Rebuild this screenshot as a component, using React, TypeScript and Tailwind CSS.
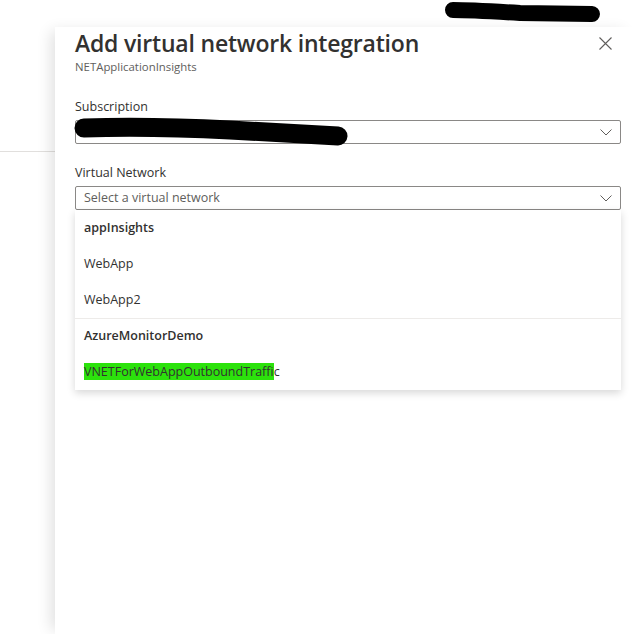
import React from 'react';

const font = { fontFamily: '"Open Sans", "Noto Sans", Arial, sans-serif' };

function Chevron() {
  return (
    <svg width="12" height="7" viewBox="0 0 12 7" fill="none">
      <path d="M0.5 0.5 L6 6 L11.5 0.5" stroke="#605e5c" strokeWidth="1" />
    </svg>
  );
}

type Item = { label: string; header?: boolean; highlight?: string; rest?: string; divider?: boolean };

const items: Item[] = [
  { label: 'appInsights', header: true },
  { label: 'WebApp' },
  { label: 'WebApp2' },
  { label: 'AzureMonitorDemo', header: true, divider: true },
  { label: 'VNETForWebAppOutboundTraffic', highlight: 'VNETForWebAppOutboundTraffi', rest: 'c' },
];

export default function App() {
  return (
    <div className="relative w-[634px] h-[634px] overflow-hidden bg-white flex text-[#323130]" style={font}>
      {/* blade behind */}
      <div className="w-[55px] shrink-0 pt-[151px]">
        <div className="border-t border-[#e1dfdd]" />
      </div>

      {/* side panel */}
      <div className="relative mt-[27px] flex-1 bg-white pl-[20px] pr-[14px] shadow-[-8px_0_14px_-4px_rgba(0,0,0,0.12)]">
        <div className="flex items-center justify-between h-[32px]">
          <h1 className="text-[23px] font-semibold leading-[32px] tracking-[-0.2px]">Add virtual network integration</h1>
          <button className="mr-[9px] text-[#605e5c]">
            <svg width="13" height="13" viewBox="0 0 13 13">
              <path d="M0.5 0.5 L12.5 12.5 M12.5 0.5 L0.5 12.5" stroke="#605e5c" strokeWidth="1.1" />
            </svg>
          </button>
        </div>
        <div className="text-[11.4px] leading-[16px] text-[#605e5c]">NETApplicationInsights</div>

        <div className="mt-[22px] text-[12.5px] leading-[20px]">Subscription</div>
        <div className="mt-[3px] h-[24px] border border-[#8a8886] rounded-[2px] flex items-center justify-end pr-[8px]">
          <Chevron />
        </div>

        <div className="mt-[19px] text-[12.5px] leading-[20px]">Virtual Network</div>
        <div className="mt-[3px] h-[24px] border border-[#8a8886] rounded-[2px] flex items-center justify-between pl-[8px] pr-[8px]">
          <span className="text-[12.5px] text-[#605e5c]">Select a virtual network</span>
          <Chevron />
        </div>

        <div className="bg-white shadow-[0_3px_8px_rgba(0,0,0,0.16)] w-[546px]">
          {items.map((it) => (
            <div
              key={it.label}
              className={`h-[36px] flex items-center pl-[9px] text-[12.5px] ${it.header ? 'font-semibold' : ''} ${it.divider ? 'border-t border-[#edebe9]' : ''}`}
            >
              {it.highlight ? (
                <span>
                  <span className="bg-[#2ce20c]">{it.highlight}</span>
                  {it.rest}
                </span>
              ) : (
                it.label
              )}
            </div>
          ))}
        </div>
      </div>

      {/* redaction marks */}
      <svg className="absolute left-0 top-0 pointer-events-none" width="634" height="634">
        <path d="M453 10 Q470 10 520 13 L592 14" stroke="#000" strokeWidth="16" strokeLinecap="round" fill="none" />
        <path d="M84 128 Q150 126 230 130 L338 136" stroke="#000" strokeWidth="19" strokeLinecap="round" fill="none" />
      </svg>
    </div>
  );
}
